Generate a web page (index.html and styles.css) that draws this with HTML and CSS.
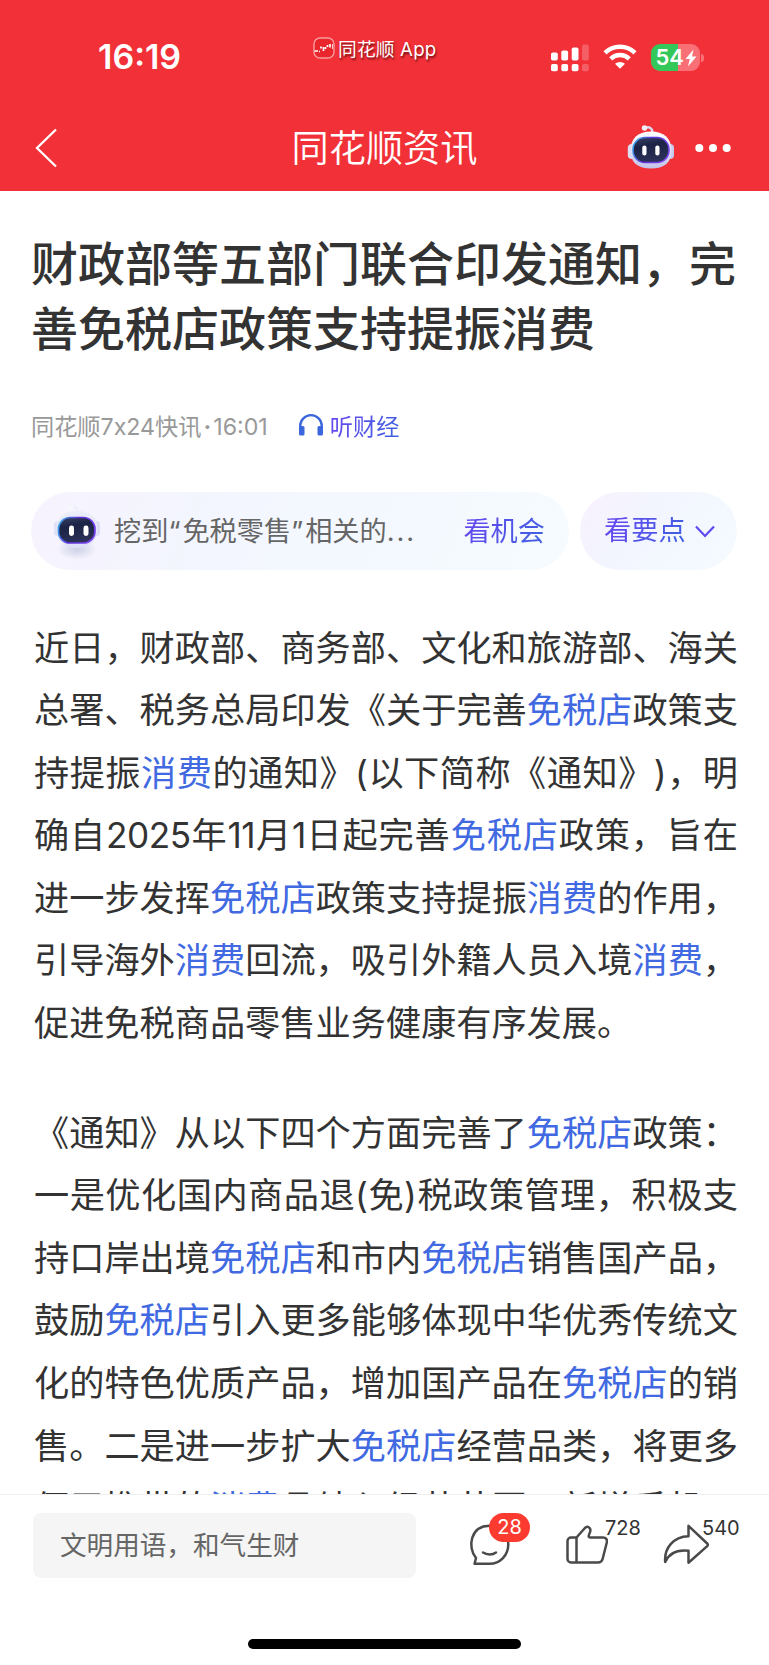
FILE: index.html
```html
<!DOCTYPE html>
<html lang="zh-CN">
<head>
  <meta charset="UTF-8" />
  <meta name="viewport" content="width=device-width, initial-scale=1.0"/>
  <title>同花顺资讯</title>
  <link rel="stylesheet" href="styles.css">
</head>
<body>
  <svg width="0" height="0" class="defs">
    <defs>
      <linearGradient id="shell" x1="0" y1="0" x2="0" y2="1">
        <stop offset="0" stop-color="#ffffff"/>
        <stop offset="1" stop-color="#c3c4ea"/>
      </linearGradient>
      <linearGradient id="rim" x1="0" y1="0" x2="1" y2="0.3">
        <stop offset="0" stop-color="#35b8f0"/>
        <stop offset="0.5" stop-color="#5d31d8"/>
        <stop offset="1" stop-color="#7b43f0"/>
      </linearGradient>
      <linearGradient id="face" x1="0" y1="0" x2="0.3" y2="1">
        <stop offset="0" stop-color="#3c4466"/>
        <stop offset="0.4" stop-color="#1a2245"/>
        <stop offset="1" stop-color="#2b3157"/>
      </linearGradient>
      <linearGradient id="paleShell" x1="0" y1="0" x2="0" y2="1">
        <stop offset="0" stop-color="#eceefa"/>
        <stop offset="1" stop-color="#dcdff6"/>
      </linearGradient>
      <radialGradient id="shade">
        <stop offset="0" stop-color="#b9c1dc" stop-opacity="0.7"/>
        <stop offset="1" stop-color="#b9c1dc" stop-opacity="0"/>
      </radialGradient>
    </defs>
  </svg>

  <header class="header">
    <div class="status">
      <span class="time">16:19</span>
      <div class="app-tag">
        <svg width="22" height="22" viewBox="0 0 22 22">
          <rect x="1" y="1" width="20" height="20" rx="6" fill="#e8262c" stroke="#fa9a9c" stroke-width="1.4"/>
          <path d="M1.5 14h3.5M6 14.5h1M8 11.500v-2M10.500 10v4M12.500 12v-2M14.500 10v-2M17 7v3.500" stroke="#fff" stroke-width="1.7"/>
          <path d="M19.500 7v5" stroke="#fff" stroke-width="0.8"/>
        </svg>
        <span>同花顺 App</span>
      </div>
      <div class="status-icons">
        <svg width="38" height="28" viewBox="0 0 38 28" fill="#fff">
          <rect x="0" y="8.500" width="6.800" height="8" rx="1.800"/>
          <rect x="10.300" y="6.500" width="6.800" height="10" rx="1.800"/>
          <rect x="20.700" y="3.500" width="6.800" height="13" rx="1.800"/>
          <rect x="0" y="20" width="6.800" height="7.200" rx="1.800"/>
          <rect x="10.300" y="20" width="6.800" height="7.200" rx="1.800"/>
          <rect x="20.700" y="20" width="6.800" height="7.200" rx="1.800"/>
          <g opacity="0.22">
            <rect x="31" y="0.500" width="6.800" height="16" rx="1.800"/>
            <rect x="31" y="20" width="6.800" height="7.200" rx="1.800"/>
          </g>
        </svg>
        <svg class="wifi" width="34" height="26" viewBox="0 0 34 26" fill="none" stroke="#fff" stroke-width="4.500">
          <path d="M2 8.800a21.500 21.500 0 0 1 30 0"/>
          <path d="M7.700 14.800a13.500 13.500 0 0 1 18.600 0"/>
          <path d="M12 19.800a7.500 7.500 0 0 1 10 0l-5 5z" fill="#fff" stroke="none"/>
        </svg>
        <div class="battery">
          <div class="battery-body">
            <span>54</span>
            <svg width="12" height="18" viewBox="0 0 12 18"><path d="M8.500 0.500L0.500 10h4.300L3 17.500 11.500 7.500H7z" fill="#fff"/></svg>
          </div>
          <i></i>
        </div>
      </div>
    </div>

    <nav class="navbar">
      <svg class="back" width="24" height="42" viewBox="0 0 24 42" fill="none" stroke="#fff" stroke-width="2.300"><path d="M22 2.500L3 21l19 18.500"/></svg>
      <h1>同花顺资讯</h1>
      <div class="nav-right">
        <svg width="48" height="46" viewBox="0 0 48 46">
          <path d="M18 3c4-2 7 0 7.500 4" fill="none" stroke="#d9dbf5" stroke-width="2.400"/>
          <circle cx="17.500" cy="3" r="2.700" fill="#f0f0fc"/>
          <rect x="0.800" y="19" width="8" height="15" rx="4" fill="#dcddf5"/>
          <rect x="39" y="19" width="8" height="15" rx="4" fill="#c9caee"/>
          <path d="M24 6.500c12.500 0 20.500 6.500 20.500 19S37 43.500 24 43.500 3.500 38 3.500 25.500 11.500 6.500 24 6.500z" fill="url(#shell)"/>
          <rect x="6" y="12.500" width="36" height="25" rx="12" fill="url(#face)" stroke="url(#rim)" stroke-width="1.600"/>
          <rect x="15.300" y="20.500" width="4.200" height="10" rx="2" fill="#fff"/>
          <rect x="28.300" y="20.500" width="4.200" height="10" rx="2" fill="#fff"/>
        </svg>
        <svg width="36" height="8" viewBox="0 0 36 8" fill="#fff">
          <circle cx="4.300" cy="4" r="4"/>
          <circle cx="18" cy="4" r="4"/>
          <circle cx="31.700" cy="4" r="4"/>
        </svg>
      </div>
    </nav>
  </header>

  <main class="article">
    <h2>财政部等五部门联合印发通知，完<br>善免税店政策支持提振消费</h2>

    <div class="meta">
      <span>同花顺7x24快讯<b>·</b>16:01</span>
      <a class="listen">
        <svg width="26" height="24" viewBox="0 0 26 24">
          <path d="M2.200 18v-5a10.800 10.800 0 0 1 21.600 0v5" fill="none" stroke="#3b66dc" stroke-width="2.300"/>
          <rect x="1" y="13" width="5.500" height="9.500" rx="1.600" fill="#3b66dc"/>
          <rect x="19.500" y="13" width="5.500" height="9.500" rx="1.600" fill="#3b66dc"/>
        </svg>
        <span class="grad">听财经</span>
      </a>
    </div>

    <div class="pills">
      <div class="pill pill-chance">
        <svg width="48" height="58" viewBox="0 0 48 58">
          <ellipse cx="24" cy="46" rx="20" ry="11" fill="url(#shade)"/>
          <path d="M18 4c4-1 6 1 7 4" fill="none" stroke="#eef0fa" stroke-width="3"/>
          <circle cx="17.500" cy="4.500" r="3" fill="#f6f6fd"/>
          <rect x="1" y="18" width="7" height="15" rx="3.500" fill="#dfe2f6"/>
          <rect x="40" y="18" width="7" height="15" rx="3.500" fill="#dcdcf5"/>
          <path d="M24 8c13 0 20.500 6 20.500 17.500S37 45 24 45 3.500 37 3.500 25.500 11 8 24 8z" fill="url(#paleShell)"/>
          <rect x="5.500" y="14.500" width="36.500" height="25.500" rx="11.500" fill="url(#face)" stroke="url(#rim)" stroke-width="1.700"/>
          <rect x="16" y="22.500" width="5" height="10.500" rx="2.400" fill="#fff"/>
          <rect x="30.500" y="22.500" width="5" height="10.500" rx="2.400" fill="#fff"/>
        </svg>
        <span class="pill-text">挖到<em>“</em>免税零售<em>”</em>相关的<em>...</em></span>
        <span class="grad">看机会</span>
      </div>
      <div class="pill pill-points">
        <span class="grad">看要点</span>
        <svg width="20" height="13" viewBox="0 0 20 13" fill="none" stroke="#6048f0" stroke-width="2.200"><path d="M1 1.500l9 9.500 9-9.500"/></svg>
      </div>
    </div>

    <div class="content">
      <p>
        <span>近日，财政部、商务部、文化和旅游部、海关</span>
        <span>总署、税务总局印发《关于完善<a>免税店</a>政策支</span>
        <span>持提振<a>消费</a>的通知》(以下简称《通知》)，明</span>
        <span>确自<i>2025</i>年<i>11</i>月<i>1</i>日起完善<a>免税店</a>政策，旨在</span>
        <span>进一步发挥<a>免税店</a>政策支持提振<a>消费</a>的作用，</span>
        <span>引导海外<a>消费</a>回流，吸引外籍人员入境<a>消费</a>，</span>
        <span class="last">促进免税商品零售业务健康有序发展。</span>
      </p>
      <p>
        <span>《通知》从以下四个方面完善了<a>免税店</a>政策：</span>
        <span>一是优化国内商品退(免)税政策管理，积极支</span>
        <span>持口岸出境<a>免税店</a>和市内<a>免税店</a>销售国产品，</span>
        <span>鼓励<a>免税店</a>引入更多能够体现中华优秀传统文</span>
        <span>化的特色优质产品，增加国产品在<a>免税店</a>的销</span>
        <span>售。二是进一步扩大<a>免税店</a>经营品类，将更多</span>
        <span>便于携带的<a>消费</a>品纳入经营范围，新增手机、</span>
      </p>
    </div>
  </main>

  <footer class="toolbar">
    <div class="comment-input">文明用语，和气生财</div>
    <div class="actions">
      <div class="action">
        <svg width="42" height="42" viewBox="0 0 42 42" fill="none" stroke="#4a4a4a" stroke-width="2.500" stroke-linejoin="round" stroke-linecap="round">
          <path d="M7 34C-2 23 1.500 2 20.500 1.800c11 0 18.800 8.500 18.800 18.500 0 11-8 19.500-18.800 19.500H5.500z"/>
          <path d="M14 28.500c4 2.600 9.500 2.600 13 0"/>
        </svg>
        <span class="badge">28</span>
      </div>
      <div class="action">
        <svg width="42" height="42" viewBox="0 0 42 42" fill="none" stroke="#4a4a4a" stroke-width="2.500" stroke-linejoin="round">
          <path d="M10.500 13.500H5a3.500 3.500 0 0 0-3.500 3.500v18A3.500 3.500 0 0 0 5 38.500h27c2.600 0 4-1.300 4.600-3.500l4.200-16.500c.7-3-.8-5-3.800-5H24c-1.300 0-1.600-1-1.100-2.300l1.200-3.400c1.300-3.800-2.400-6.500-5.200-3.800L10.500 13.500z"/>
          <path d="M10.500 13.500v25"/>
        </svg>
        <span class="count">728</span>
      </div>
      <div class="action">
        <svg width="46" height="42" viewBox="0 0 46 42" fill="none" stroke="#4a4a4a" stroke-width="2.500" stroke-linejoin="round">
          <path d="M25.500 1.800L44.200 19.500c.9.900.9 1.700 0 2.600L25.500 38.700V26.800C14.500 25.500 6.500 28.500 2.200 38c-1.200-13.500 8-25.500 23.300-25.800z"/>
        </svg>
        <span class="count">540</span>
      </div>
    </div>
    <div class="home-bar"></div>
  </footer>
</body>
</html>
```

FILE: styles.css
```css
* {
  box-sizing: border-box;
}

body {
  margin: 0;
  height: 1665px;
  display: flex;
  flex-direction: column;
  overflow: hidden;
  background: #fff;
  color: #333;
  font-family: Inter, "Noto Sans CJK SC", sans-serif;
  text-spacing-trim: space-all;
}

svg {
  display: block;
  flex: none;
}

.defs {
  position: absolute;
}

/* Header */
.header {
  flex: none;
  height: 191px;
  background-color: #f23038;
  color: #fff;
}

.status {
  display: grid;
  grid-template-columns: 313px 238px 1fr;
  height: 105px;
}

.time {
  padding: 36px 0 0 98px;
  font-size: 34px;
  line-height: 42px;
  font-weight: 600;
}

.app-tag {
  display: flex;
  gap: 3px;
  padding-top: 37px;
  font-size: 18.700px;
  line-height: 26px;
  letter-spacing: 0.200px;
  white-space: nowrap;
  text-shadow: 1px 2px 2px rgba(60, 0, 0, 0.7);
}

.status-icons {
  display: flex;
  padding-top: 43.500px;
}

.wifi {
  margin: 0 13.500px 0 14px;
}

.battery {
  display: flex;
  align-items: center;
  height: 28px;
}

.battery-body {
  display: flex;
  align-items: center;
  gap: 1px;
  width: 49px;
  height: 27px;
  padding-left: 5px;
  border-radius: 9px;
  background: linear-gradient(90deg, #34c759 55%, #f87076 55%);
  font-size: 22px;
  line-height: 27px;
  font-weight: 600;
}

.battery i {
  width: 3px;
  height: 8px;
  margin-left: 1.500px;
  border-radius: 0 3px 3px 0;
  background-color: #f87076;
}

.navbar {
  display: grid;
  grid-template-columns: 200px 1fr 200px;
  align-items: center;
  height: 85px;
}

.back {
  margin-left: 34px;
}

.navbar h1 {
  margin: 2px 0 0;
  font-size: 37.200px;
  line-height: 60px;
  font-weight: 350;
  text-align: center;
}

.nav-right {
  display: flex;
  align-items: center;
  gap: 20px;
  padding-left: 58px;
}

/* Article */
.article {
  flex: 1;
  min-height: 0;
  overflow: hidden;
  padding: 41px 31px 0;
}

.article h2 {
  margin: 0 -10px 0 0;
  font-size: 47px;
  line-height: 64.500px;
  font-weight: 500;
  white-space: nowrap;
}

.meta {
  display: flex;
  align-items: center;
  margin-top: 40px;
  height: 48px;
  font-size: 23.200px;
  color: #999;
}

.meta b {
  margin: 0 2px;
}

.listen {
  display: flex;
  align-items: center;
  gap: 6px;
  margin-left: 30px;
}

.grad {
  background: linear-gradient(120deg, #6a45f2, #3b62e0);
  -webkit-background-clip: text;
  background-clip: text;
  color: transparent;
}

.pills {
  display: flex;
  gap: 11px;
  margin-top: 43px;
  font-size: 27.200px;
  line-height: 40px;
  white-space: nowrap;
}

.pill {
  display: flex;
  align-items: center;
  height: 78px;
  border-radius: 39px;
}

.pill-chance {
  width: 538px;
  padding: 1px 24px 0 22px;
  background: linear-gradient(110deg, #f7f3fe, #f3f6fe 35%, #f5fbff);
}

.pill-text {
  flex: 1;
  margin-left: 13px;
  color: #666;
}

.pill-text em {
  font-style: normal;
  letter-spacing: 2px;
}

.pill-points {
  gap: 9px;
  width: 157px;
  padding: 0 0 0 24px;
  background: linear-gradient(130deg, #f9f1fd, #f3f5fe 35%, #f4fbff);
}

.content {
  width: 704px;
  margin: 46.500px 0 0 3px;
  font-size: 35.200px;
  line-height: 62.600px;
}

.content p {
  margin: 0 0 47px;
}

.content span {
  display: block;
  white-space: nowrap;
  text-align: justify;
  text-align-last: justify;
}

.content .last {
  text-align-last: left;
}

.content i {
  font-style: normal;
  letter-spacing: -0.500px;
}

.content a {
  color: #4169e1;
}

/* Bottom toolbar */
.toolbar {
  flex: none;
  display: grid;
  grid-template-columns: 383px 1fr;
  grid-template-rows: 65px 1fr;
  height: 171px;
  padding: 18px 28px 16px 33px;
  border-top: 1px solid #eee;
}

.comment-input {
  padding-left: 27px;
  border-radius: 8px;
  background-color: #f5f5f5;
  color: #666;
  font-size: 26.600px;
  line-height: 65px;
}

.actions {
  display: flex;
  padding: 11px 0 0 53px;
  gap: 55px;
}

.action {
  position: relative;
}

.badge {
  position: absolute;
  left: 20px;
  top: -11px;
  width: 41px;
  height: 29px;
  border-radius: 15px;
  background-color: #fb3b30;
  color: #fff;
  font-size: 20px;
  line-height: 29px;
  text-align: center;
}

.count {
  position: absolute;
  left: 39px;
  top: -10px;
  font-size: 20px;
  line-height: 29px;
}

.home-bar {
  grid-column: 1 / 3;
  align-self: end;
  justify-self: center;
  width: 273px;
  height: 10px;
  margin-right: 5px;
  border-radius: 5px;
  background-color: #000;
}
```
